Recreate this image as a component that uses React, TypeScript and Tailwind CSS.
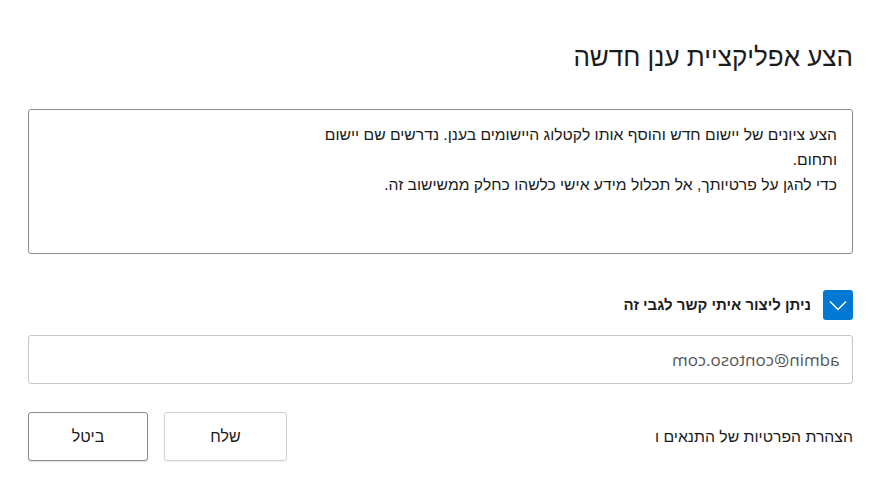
import React from "react";

const App = () => {
  return (
    <div
      dir="rtl"
      className="w-[885px] h-[491px] bg-white text-[#1b1b1b] pr-[32px] pl-[28px] pt-[40px] font-['Liberation_Sans','DejaVu_Sans',sans-serif]"
    >
      <h1 className="text-[26px] leading-[34px] font-normal">הצע אפליקציית ענן חדשה</h1>

      <div className="mt-[35px] h-[145px] border border-[#8a8a8a] rounded-[3px] px-[15px] pt-[12px] text-[15.7px] leading-[25px]">
        הצע ציונים של יישום חדש והוסף אותו לקטלוג היישומים בענן. נדרשים שם יישום
        <br />
        ותחום.
        <br />
        כדי להגן על פרטיותך, אל תכלול מידע אישי כלשהו כחלק ממשישוב זה.
      </div>

      <div className="mt-[36px] flex items-center gap-[12px]">
        <div className="w-[30px] h-[30px] rounded-[3px] bg-[#0078d4] flex items-center justify-center">
          <svg width="30" height="30" viewBox="0 0 30 30" fill="none">
            <path d="M7 11.5l8 8 8-8" stroke="white" strokeWidth="1.4" />
          </svg>
        </div>
        <span className="text-[15px] font-bold">ניתן ליצור איתי קשר לגבי זה</span>
      </div>

      <div className="mt-[15px] h-[49px] border border-[#c6c6c6] rounded-[3px] flex items-center pr-[12px]">
        <span className="-scale-x-100 text-[17px] text-[#555555] font-['Open_Sans',sans-serif]">
          admin@contoso.com
        </span>
      </div>

      <div className="mt-[28px] flex items-center">
        <span className="text-[15.8px] text-[#1b1b1b]">הצהרת הפרטיות של התנאים ו</span>
        <div className="mr-auto flex gap-[16px]">
          <button className="w-[123px] h-[49px] border border-[#d1d1d1] rounded-[3px] bg-white text-[16px] font-normal shadow-[0_1px_2px_rgba(0,0,0,0.06)]">
            שלח
          </button>
          <button className="w-[120px] h-[49px] border border-[#8a8a8a] rounded-[3px] bg-white text-[16px] font-normal shadow-[0_1px_2px_rgba(0,0,0,0.12)]">
            ביטל
          </button>
        </div>
      </div>
    </div>
  );
};

export default App;
